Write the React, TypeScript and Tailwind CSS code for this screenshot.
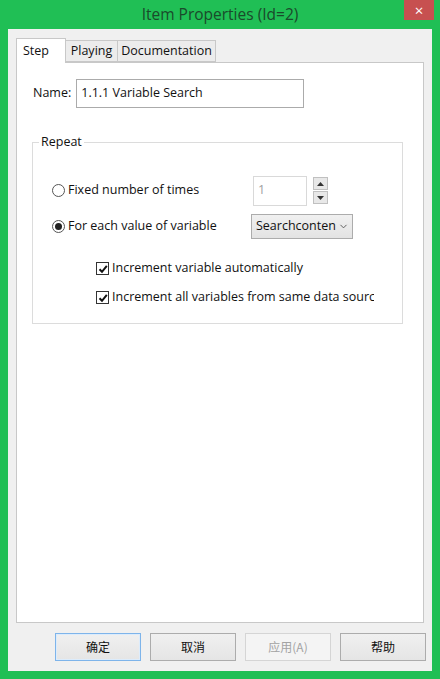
import { ChevronDown } from 'lucide-react';

// Dialog "Item Properties" in the Windows 8 look.
const ui = { fontFamily: '"Open Sans", "Noto Sans CJK SC", sans-serif' };

function Btn({ label, primary, disabled }: { label: string; primary?: boolean; disabled?: boolean }) {
  const base = 'flex h-[28px] w-[86px] items-center justify-center border text-[12px]';
  if (disabled)
    return <div className={`${base} border-[#d5d5d5] bg-[#f4f4f4] text-[#a3a3a3]`}>{label}</div>;
  return (
    <div
      className={`${base} bg-gradient-to-b from-[#f0f0f0] to-[#e5e5e5] text-[#111] ${
        primary ? 'border-[#7eb4ea] shadow-[inset_0_0_0_1px_#dcecfc]' : 'border-[#acacac]'
      }`}
    >
      {label}
    </div>
  );
}

function Check({ label }: { label: string }) {
  return (
    <div className="flex h-[16px] items-center gap-[3px] whitespace-nowrap">
      <span className="flex h-[13px] w-[13px] shrink-0 items-center justify-center border border-[#333] bg-white">
        <svg width="10" height="10" viewBox="0 0 10 10">
          <path d="M1.5 5.2 L4 7.8 L8.8 1.8" fill="none" stroke="#111" strokeWidth="2" />
        </svg>
      </span>
      <span>{label}</span>
    </div>
  );
}

function Radio({ label, on }: { label: string; on?: boolean }) {
  return (
    <div className="flex items-center gap-[3px]">
      <span className="flex h-[13px] w-[13px] items-center justify-center rounded-full border border-[#555] bg-white">
        {on && <span className="h-[7px] w-[7px] rounded-full bg-[#222]" />}
      </span>
      <span>{label}</span>
    </div>
  );
}

export default function App() {
  return (
    <div className="flex h-[679px] w-[440px] flex-col bg-[#20bf55] text-[12.5px] text-[#111]" style={ui}>
      <div className="relative flex h-[29px] items-center justify-center">
        <span className="pt-[1px] text-[15.5px] text-[#1a4a2b]">Item Properties (Id=2)</span>
        <div className="absolute right-[6px] top-0 flex h-[20px] w-[30px] items-center justify-center bg-[#c75050] text-[15px] leading-none text-white">
          ×
        </div>
      </div>

      <div className="mx-[8px] mb-[8px] flex flex-1 flex-col bg-[#f0f0f0] pl-[8px] pt-[9px]">
        <div className="flex items-end">
          <div className="relative z-10 -mb-px flex h-[25px] w-[50px] items-start border border-b-0 border-[#c8c8c8] bg-white pl-[6px] pt-[3px]">
            Step
          </div>
          <div className="flex h-[22px] w-[52px] items-center justify-center border border-l-0 border-[#c8c8c8] bg-[#ececec]">
            Playing
          </div>
          <div className="flex h-[22px] w-[98px] items-center justify-center border border-l-0 border-[#c8c8c8] bg-[#ececec]">
            Documentation
          </div>
        </div>

        <div className="mr-[8px] flex h-[561px] flex-col border border-[#c8c8c8] bg-white px-[15px] pt-[16px]">
          <div className="flex items-center gap-[5px]">
            <span className="pl-[1px]">Name:</span>
            <div className="flex h-[29px] w-[228px] items-start border border-[#ababab] pl-[4px] pt-[4px]">
              1.1.1 Variable Search
            </div>
          </div>

          <fieldset className="mt-[25px] h-[191px] w-[371px] border border-[#dcdcdc]">
            <legend className="ml-[6px] px-[2px]">Repeat</legend>
            <div className="pl-[19px]">
              <div className="mt-[24px] flex h-[30px] items-center">
                <div className="w-[201px]">
                  <Radio label="Fixed number of times" />
                </div>
                <div className="flex h-[30px] w-[54px] items-start border border-[#d9d9d9] pl-[4px] pt-[4px] text-[#a0a0a0]">
                  1
                </div>
                <div className="ml-[6px] flex flex-col gap-px">
                  <div className="flex h-[13px] w-[15px] items-center justify-center border border-[#c0c0c0] bg-[#e8e8e8]">
                    <svg width="7" height="4" viewBox="0 0 7 4"><path d="M0 4 L3.5 0 L7 4Z" fill="#333" /></svg>
                  </div>
                  <div className="flex h-[13px] w-[15px] items-center justify-center border border-[#c0c0c0] bg-[#e8e8e8]">
                    <svg width="7" height="4" viewBox="0 0 7 4"><path d="M0 0 L3.5 4 L7 0Z" fill="#333" /></svg>
                  </div>
                </div>
              </div>
              <div className="mt-[9px] flex h-[24px] items-center">
                <div className="w-[199px]">
                  <Radio label="For each value of variable" on />
                </div>
                <div className="flex h-[25px] w-[102px] items-center justify-between border border-[#acacac] bg-gradient-to-b from-[#f0f0f0] to-[#e3e3e3] pl-[4px] pr-[3px]">
                  <span>Searchconten</span>
                  <ChevronDown size={11} strokeWidth={2} className="text-[#555]" />
                </div>
              </div>
              <div className="ml-[44px] mt-[22px] flex w-[278px] flex-col gap-[13px] overflow-hidden">
                <Check label="Increment variable automatically" />
                <Check label="Increment all variables from same data source" />
              </div>
            </div>
          </fieldset>
        </div>

        <div className="mt-[10px] flex justify-end gap-[9px] pr-[6px]" style={{ fontFamily: '"Noto Sans CJK SC", sans-serif' }}>
          <Btn label="确定" primary />
          <Btn label="取消" />
          <Btn label="应用(A)" disabled />
          <Btn label="帮助" />
        </div>
      </div>
    </div>
  );
}
